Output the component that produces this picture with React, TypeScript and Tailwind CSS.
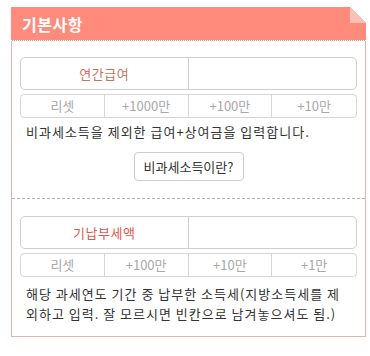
const font = { fontFamily: '"Noto Sans CJK KR", "Noto Sans", sans-serif' };

type Group = {
  readonly label: string;
  readonly labelClass: string;
  readonly steps: readonly string[];
};

const salary: Group = {
  label: "연간급여",
  labelClass: "text-[#c9705f]",
  steps: ["리셋", "+1000만", "+100만", "+10만"]
};

const paidTax: Group = {
  label: "기납부세액",
  labelClass: "text-[#e0584a]",
  steps: ["리셋", "+100만", "+10만", "+1만"]
};

function InputGroup({ group }: { group: Group }) {
  return (
    <div>
      <div className="grid h-[33px] grid-cols-2 rounded-[5px] border border-[#cfcfcf] bg-white">
        <div className={`flex items-center justify-center border-r border-[#cfcfcf] text-[13px] tracking-[0.5px] ${group.labelClass}`}>
          {group.label}
        </div>
        <input className="w-full bg-transparent px-2 text-[13px] outline-none" aria-label={group.label} />
      </div>
      <div className="mt-[4px] grid h-[24px] grid-cols-4 rounded-[4px] border border-[#d6d6d6] bg-white">
        {group.steps.map((step, i) => (
          <button
            key={step}
            className={`flex items-center justify-center text-[13px] text-[#a8a8a8] ${i < 3 ? "border-r border-[#d6d6d6]" : ""}`}
          >
            {step}
          </button>
        ))}
      </div>
    </div>
  );
}

export default function App() {
  return (
    <div className="min-h-screen bg-white pt-[7px] pl-[11px]" style={font}>
      <div className="w-[355px]">
        <div className="relative flex h-[34px] items-center border-b border-dotted border-white bg-[#fe8b7b] pl-[11px]">
          <h2 className="text-[16px] font-bold leading-none tracking-[0.5px] text-white">기본사항</h2>
          <svg className="absolute top-0 right-0" width="16" height="16" viewBox="0 0 16 16">
            <polygon points="0,0 16,0 16,16" fill="#ffffff" />
            <polygon points="0,0 0,16 16,16" fill="#fcc1b6" />
          </svg>
        </div>
        <div className="border-x border-b border-[#dcb6a8] bg-white">
          <section className="border-b border-dashed border-[#b5b5b5] px-[8px] pt-[16px] pb-[17px]">
            <InputGroup group={salary} />
            <p className="mt-[4px] pl-[6px] text-[13px] leading-[20px] tracking-[1px] text-[#333]">
              비과세소득을 제외한 급여+상여금을 입력합니다.
            </p>
            <div className="mt-[10px] flex justify-center">
              <button className="h-[29px] w-[110px] rounded-[4px] border border-[#cccccc] bg-white text-[13px] text-[#333]">
                비과세소득이란?
              </button>
            </div>
          </section>
          <section className="px-[8px] pt-[17px] pb-[12px]">
            <InputGroup group={paidTax} />
            <p className="mt-[7px] pl-[6px] pr-[8px] text-[13px] leading-[20px] tracking-[1px] text-[#333]">
              해당 과세연도 기간 중 납부한 소득세(지방소득세를 제외하고 입력. 잘 모르시면 빈칸으로 남겨놓으셔도 됨.)
            </p>
          </section>
        </div>
      </div>
    </div>
  );
}
